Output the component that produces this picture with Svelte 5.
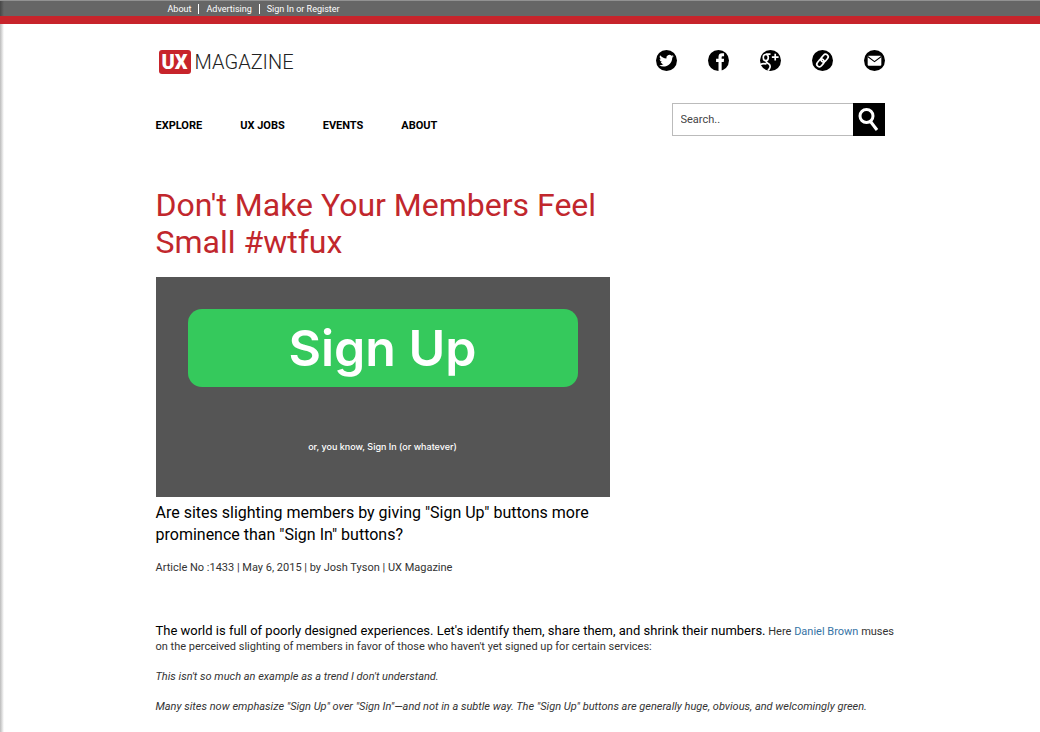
<script>
  let query = $state("");

  const topLinks = ["About", "Advertising", "Sign In or Register"];
  const sections = ["Explore", "UX Jobs", "Events", "About"];
</script>

<div class="page">
  <div class="topbar">
    <nav class="wrap" aria-label="Site">
      {#each topLinks as link}
        <a href="#top">{link}</a>
      {/each}
    </nav>
  </div>

  <header class="wrap">
    <div class="brand-row">
      <a class="logo" href="#home"><b>UX</b><span>MAGAZINE</span></a>
      <div class="social">
        <a href="#twitter" aria-label="Twitter">
          <svg viewBox="0 0 20 20">
            <circle cx="10" cy="10" r="10" />
            <path
              class="fill"
              d="M17 5.8c-.5.3-1.100.4-1.600.5.6-.4 1-.9 1.200-1.500-.6.3-1.200.5-1.800.7A2.900 2.900 0 0 0 9.900 8.100C7.500 8 5.400 6.900 3.900 5.100c-.8 1.400-.3 3 .9 3.800-.5 0-.9-.1-1.300-.3 0 1.400 1 2.500 2.300 2.800-.4.100-.8.100-1.300 0 .4 1.100 1.400 1.900 2.700 2-1.200.9-2.700 1.300-4.200 1.200 4.700 2.800 12.300.3 12.500-7.300.6-.4 1.100-.9 1.500-1.500z"
            />
          </svg>
        </a>
        <a href="#facebook" aria-label="Facebook">
          <svg viewBox="0 0 20 20">
            <circle cx="10" cy="10" r="10" />
            <path
              class="fill"
              d="M10 20v-8.500H7.700V8.300H10V6.500C10 4.300 11.300 3.200 13.200 3.200h2.100V6h-1.500c-.6 0-.8.300-.8.900v1.400h2.300l-.3 3.200h-2V20z"
            />
          </svg>
        </a>
        <a href="#google-plus" aria-label="Google Plus">
          <svg viewBox="0 0 20 20">
            <circle cx="10" cy="10" r="10" />
            <ellipse class="line" cx="5.500" cy="7.200" rx="2.400" ry="2.900" />
            <path
              class="line"
              d="M10 4H5.500M6.300 10.200c-1.500 1.600 1.300 2.100 2.600 3.500 1.500 1.700.5 4.600-1.400 5.600M0 14c1.600-1 4.600-1.200 6.200-.7M14.500 3.500v6.400M11.300 6.700h6.400"
            />
          </svg>
        </a>
        <a href="#link" aria-label="Copy link">
          <svg viewBox="0 0 20 20">
            <circle cx="10" cy="10" r="10" />
            <g class="line" transform="rotate(-50 10 10)">
              <rect x="3" y="7.500" width="8" height="5" rx="2.500" />
              <rect x="9" y="7.500" width="8" height="5" rx="2.500" />
            </g>
          </svg>
        </a>
        <a href="#email" aria-label="Email">
          <svg viewBox="0 0 20 20">
            <circle cx="10" cy="10" r="10" />
            <rect class="fill" x="3.500" y="5.500" width="13" height="9.500" rx="1" />
            <path class="fold" d="M3.500 6.200L10 11l6.500-4.800" />
          </svg>
        </a>
      </div>
    </div>

    <div class="nav-row">
      <nav class="sections" aria-label="Sections">
        {#each sections as section}
          <a href="#section">{section}</a>
        {/each}
      </nav>
      <form class="search" onsubmit={(e) => e.preventDefault()}>
        <input
          type="text"
          placeholder="Search.."
          aria-label="Search"
          bind:value={query}
        />
        <button aria-label="Submit search">
          <svg viewBox="0 0 32 32">
            <circle cx="13.500" cy="12" r="6.500" />
            <path d="M17.500 17.500l6.500 8.500" />
          </svg>
        </button>
      </form>
    </div>
  </header>

  <main class="wrap">
    <div class="lead">
      <h1>Don't Make Your Members Feel Small #wtfux</h1>
      <div class="hero">
        <button>Sign Up</button>
        <p>or, you know, Sign In (or whatever)</p>
      </div>
      <h2>
        Are sites slighting members by giving "Sign Up" buttons more prominence
        than "Sign In" buttons?
      </h2>
      <p class="meta">
        Article No :1433 | May 6, 2015 | by Josh Tyson | UX Magazine
      </p>
    </div>

    <article>
      <p>
        <strong
          >The world is full of poorly designed experiences. Let's identify
          them, share them, and shrink their numbers.</strong
        >
        Here <a href="#author">Daniel Brown</a> muses on the perceived slighting
        of members in favor of those who haven't yet signed up for certain services:
      </p>
      <p><em>This isn't so much an example as a trend I don't understand.</em></p>
      <p>
        <em
          >Many sites now emphasize "Sign Up" over "Sign In"—and not in a subtle
          way. The "Sign Up" buttons are generally huge, obvious, and
          welcomingly green.</em
        >
      </p>
    </article>
  </main>
</div>

<style>
  :global(body) {
    background: #fff;
  }
  .page {
    min-height: 100vh;
    font-family: Roboto, "Liberation Sans", sans-serif;
    font-size: 11px;
    line-height: 15px;
    color: #333;
    background: linear-gradient(to right, #bbb, #fff 4px);
  }
  .wrap {
    box-sizing: border-box;
    width: 100%;
    max-width: 729px;
    margin: 0 auto;
  }
  a {
    color: inherit;
    text-decoration: none;
  }
  h1,
  h2,
  p {
    margin: 0;
    font-weight: 400;
  }
  svg {
    display: block;
    width: 100%;
  }

  .topbar {
    background: linear-gradient(to right, rgba(0, 0, 0, 0.3), transparent 4px),
      #666;
    border-top: 1px solid #929292;
    border-bottom: 8px solid #c7242b;
  }
  .topbar nav {
    display: flex;
    align-items: center;
    height: 15px;
    padding-left: 5px;
  }
  .topbar a {
    padding: 0 7px;
    font-size: 9px;
    line-height: 10px;
    color: #fff;
  }
  .topbar a + a {
    border-left: 1px solid #fff;
  }

  .brand-row,
  .nav-row {
    display: flex;
    justify-content: space-between;
    align-items: flex-start;
  }
  .brand-row {
    padding-top: 26px;
  }
  .logo {
    display: flex;
    align-items: center;
    gap: 4px;
    margin-left: 3px;
    font-size: 20px;
    line-height: 24px;
    color: #222;
  }
  .logo b {
    padding: 0 3px;
    border-radius: 3px;
    background: #c7242b;
    color: #fff;
    font-weight: 900;
  }
  .logo span {
    font-weight: 300;
  }
  .social {
    display: flex;
    gap: 31px;
  }
  .social a {
    width: 21px;
  }
  .social .fill {
    fill: #fff;
  }
  .social .line {
    fill: none;
    stroke: #fff;
    stroke-width: 1.6;
  }
  .social .fold {
    fill: none;
    stroke: #000;
  }

  .nav-row {
    align-items: flex-end;
    margin-top: 29px;
  }
  .sections {
    display: flex;
    gap: 38px;
    padding-bottom: 3px;
    font-size: 11px;
    font-weight: 700;
    color: #000;
    text-transform: uppercase;
  }
  .search {
    display: flex;
    width: 213px;
    height: 33px;
  }
  .search input {
    box-sizing: border-box;
    flex: 1;
    min-width: 0;
    padding: 0 8px;
    border: 1px solid #bbb;
    border-right: 0;
    font: inherit;
    color: #444;
  }
  .search input::placeholder {
    color: #444;
  }
  .search button {
    width: 32px;
    padding: 0;
    border: 0;
    background: #000;
  }
  .search svg {
    fill: none;
    stroke: #fff;
    stroke-width: 3;
  }

  .lead {
    max-width: 454px;
    margin-top: 51px;
  }
  h1 {
    font-size: 32px;
    line-height: 37px;
    color: #c1272d;
  }
  .hero {
    display: flex;
    flex-direction: column;
    align-items: center;
    box-sizing: border-box;
    height: 220px;
    margin-top: 16px;
    padding: 32px;
    background: #555;
    color: #fff;
    font-family: Inter, sans-serif;
  }
  .hero button {
    width: 100%;
    height: 78px;
    padding: 0;
    border: 0;
    border-radius: 14px;
    background: #35c95c;
    color: #fff;
    font: 600 50px/78px Inter, sans-serif;
  }
  .hero p {
    margin-top: 52px;
    font-size: 9px;
    font-weight: 500;
  }
  h2 {
    margin-top: 5px;
    font-size: 16px;
    line-height: 22px;
    color: #000;
  }
  .meta {
    margin-top: 14px;
  }
  article {
    margin: 48px -16px 0 0;
  }
  article p {
    margin-bottom: 15px;
  }
  strong {
    font-size: 13px;
    font-weight: 400;
    color: #000;
  }
  article a {
    color: #3673a5;
  }
</style>
